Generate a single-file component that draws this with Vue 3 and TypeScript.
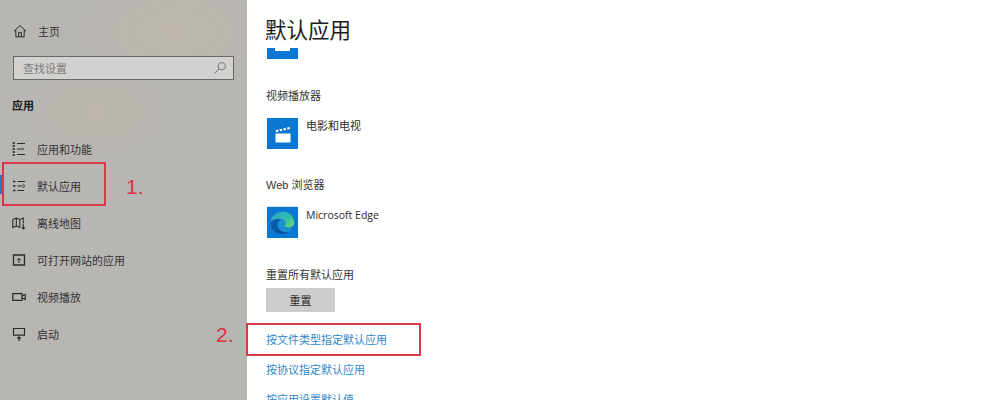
<template>
  <div class="settings">
    <aside class="sidebar">
      <div class="home">
        <svg class="nav-icon" viewBox="0 0 14 14" fill="none" stroke="#2b2b2b" stroke-width="1">
          <path d="M1 7.2 7 1.6 13 7.2M2.8 5.6V12.8H11.2V5.6M5.6 12.8V8.4H8.4V12.8" />
        </svg>
        <span>主页</span>
      </div>
      <div class="search">
        <span>查找设置</span>
        <svg width="14" height="14" viewBox="0 0 14 14" fill="none" stroke="#787876" stroke-width="1">
          <circle cx="8.8" cy="5.2" r="3.7" />
          <path d="M6 8 1.5 12.5" />
        </svg>
      </div>
      <div class="section-title">应用</div>
      <nav class="nav">
        <div v-for="item in navItems" :key="item.label" class="nav-item" :class="{ 'nav-item--active': item.active }">
          <svg class="nav-icon" viewBox="0 0 14 14" fill="none" stroke="#2b2b2b" stroke-width="1" v-html="item.icon"></svg>
          <span>{{ item.label }}</span>
        </div>
      </nav>
    </aside>

    <main class="content">
      <h1 class="title">默认应用</h1>
      <div class="scroller">
        <div class="clipped-tile"></div>

        <section class="group group--video">
          <h2 class="group-label">视频播放器</h2>
          <div class="app-row">
            <div class="tile">
              <svg width="18" height="18" viewBox="0 0 18 18">
                <path fill="#fff" d="M1.5 8.5H16.5V17.5H1.5Z" />
                <path fill="#fff" d="M1.6 5.2 4 4.6 4.6 6.6 2.2 7.2ZM5.4 4.3 7.8 3.7 8.4 5.7 6 6.3ZM9.2 3.4 11.6 2.8 12.2 4.8 9.8 5.4ZM13 2.5 15.4 1.9 16 3.9 13.6 4.5Z" />
              </svg>
            </div>
            <span class="app-name">电影和电视</span>
          </div>
        </section>

        <section class="group group--web">
          <h2 class="group-label">Web 浏览器</h2>
          <div class="app-row">
            <div class="tile tile--edge">
              <svg width="31" height="31" viewBox="0 0 31 31">
                <defs>
                  <linearGradient id="edgeTop" x1="0" y1="0" x2="1" y2="1">
                    <stop offset="0" stop-color="#2a9bd8" />
                    <stop offset="0.6" stop-color="#35c1a5" />
                    <stop offset="1" stop-color="#6fdc6a" />
                  </linearGradient>
                  <linearGradient id="edgeBottom" x1="0" y1="0" x2="1" y2="1">
                    <stop offset="0" stop-color="#0c5fae" />
                    <stop offset="1" stop-color="#0d4d9c" />
                  </linearGradient>
                </defs>
                <path fill="url(#edgeTop)" d="M3.5 15C4.5 8.5 9.5 4.5 15.5 4.5 22.5 4.5 27.3 9.8 27.3 15.5 27.3 18.8 24.5 20.5 21.5 20.5 19 20.5 17.5 19.8 17 19.2 19 18 19.2 15.5 17.8 14 15 11.2 8 10.8 3.5 15Z" />
                <path fill="url(#edgeBottom)" d="M3.5 15C3 21.5 8.5 27 15 27 18 27 20.5 26 22 24.6 17.5 26.2 12 24 10.8 19.5 10 16.5 11.5 13.5 14.2 12.4 10.5 11.4 6.5 12.3 3.5 15Z" />
                <path fill="#1b8fd0" d="M14.2 12.4C11.5 13.5 10 16.5 10.8 19.5 12 24 17.5 26.2 22 24.6 24 23.5 25.3 22 26 20.5 24.8 21 23 21.2 21.5 20.5 19 20.5 17.5 19.8 17 19.2 19 18 19.2 15.5 17.8 14 16.9 13.1 15.6 12.7 14.2 12.4Z" />
              </svg>
            </div>
            <span class="app-name app-name--latin">Microsoft Edge</span>
          </div>
        </section>

        <section class="group group--reset">
          <h2 class="group-label">重置所有默认应用</h2>
          <button class="reset-button" type="button">重置</button>
        </section>

        <div class="links">
          <a class="link">按文件类型指定默认应用</a>
          <a class="link">按协议指定默认应用</a>
          <a class="link">按应用设置默认值</a>
        </div>
      </div>
    </main>

    <!-- red annotations drawn over the screenshot -->
    <div class="mark mark--one"></div>
    <span class="mark-label mark-label--one">1.</span>
    <div class="mark mark--two"></div>
    <span class="mark-label mark-label--two">2.</span>
  </div>
</template>

<script setup lang="ts">
interface NavItem {
  label: string
  icon: string
  active?: boolean
}

const navItems: NavItem[] = [
  {
    label: '应用和功能',
    icon: '<path d="M.5 1H3M.5 4H3M.5 7H3M.5 10H3M.5 13H3" stroke-width="1.7"/><path d="M5 1.5H13M5 7H12M5 12.5H13"/>'
  },
  {
    label: '默认应用',
    icon: '<path d="M1 2.5H3.4M1 7H3.4M1 11.5H3.4" stroke-width="1.7"/><path d="M5.5 2.5H13M5.5 7H10.5M5.5 11.5H12M10.8 5.4 12.8 7 10.8 8.6"/>',
    active: true
  },
  {
    label: '离线地图',
    icon: '<path d="M.8 3.5 4.3 2 7.8 3.5 11.3 2V7.5M.8 3.5V11.5L4.3 10 7.8 11.5M4.3 2V10M7.8 3.5V11.5M11.3 8V13M9.8 11.4 11.3 13 12.8 11.4" stroke-width="1.1"/>'
  },
  {
    label: '可打开网站的应用',
    icon: '<path d="M1.5 2H12.5V12H1.5Z" stroke-width="1.3"/><path d="M7 10V5.5M5 7.3 7 5.3 9 7.3"/>'
  },
  {
    label: '视频播放',
    icon: '<path d="M.8 3.6H10V10.4H.8ZM10 6 13.2 4.4V9.6L10 8" stroke-width="1.2"/>'
  },
  {
    label: '启动',
    icon: '<path d="M1.5 1.5H12.5V8.2H1.5Z" stroke-width="1.2"/><path d="M7 14V9.8M5.2 11.6 7 9.8 8.8 11.6" stroke-width="1.2"/>'
  }
]
</script>

<style>
html,
body {
  margin: 0;
  background: #fff;
}
</style>

<style scoped>
.settings {
  position: relative;
  display: flex;
  width: 988px;
  height: 400px;
  overflow: hidden;
  font-family: "Liberation Sans", "Noto Sans CJK SC", sans-serif;
  font-size: 11px;
  color: #333;
  background: #fff;
}

.sidebar {
  flex: none;
  width: 247px;
  box-sizing: border-box;
  padding-top: 24px;
  background:
    radial-gradient(ellipse 90px 50px at 175px 32px, rgba(193, 184, 168, 0.6), transparent),
    radial-gradient(ellipse 70px 40px at 95px 112px, rgba(192, 183, 167, 0.6), transparent),
    #b8b6b3;
}

.home {
  display: flex;
  align-items: center;
  gap: 11px;
  height: 14px;
  padding-left: 13px;
}

.nav-icon {
  flex: none;
  width: 14px;
  height: 14px;
}

.search {
  display: flex;
  align-items: center;
  justify-content: space-between;
  box-sizing: border-box;
  width: 221px;
  height: 24px;
  margin: 18px 0 0 13px;
  padding: 0 6px 0 9px;
  border: 1px solid #686866;
  background: #d2d1cf;
  color: #7c7c7a;
}

.section-title {
  margin: 19px 0 0 12px;
  font-weight: 700;
  line-height: 14px;
  color: #1c1c1c;
}

.nav {
  display: flex;
  flex-direction: column;
  margin-top: 17px;
}

.nav-item {
  position: relative;
  display: flex;
  align-items: center;
  gap: 11px;
  height: 37px;
  padding-left: 12px;
}

.nav-item--active::before {
  content: "";
  position: absolute;
  left: 0;
  top: 8px;
  width: 3px;
  height: 19px;
  background: #2f74c4;
}

.content {
  flex: 1;
  display: flex;
  flex-direction: column;
  min-width: 0;
  padding-left: 19px;
}

.title {
  flex: none;
  height: 48px;
  margin: 0 0 0 -1px;
  font-size: 21.5px;
  font-weight: 400;
  line-height: 62px;
  color: #1b1b1b;
}

.scroller {
  flex: 1;
  min-height: 0;
  overflow: hidden;
}

.clipped-tile {
  position: relative;
  width: 31px;
  height: 11px;
  margin-left: 1px;
  background: #0a78d2;
}

.clipped-tile::before {
  content: "";
  position: absolute;
  top: 0;
  left: 8px;
  width: 15px;
  height: 3px;
  background: #fff;
}

.group--video {
  margin-top: 30px;
}

.group--web {
  margin-top: 29px;
}

.group--reset {
  margin-top: 30px;
}

.group-label {
  margin: 0;
  font-size: 11px;
  font-weight: 400;
  line-height: 14px;
  color: #333;
}

.app-row {
  display: flex;
  gap: 8px;
  margin: 15px 0 0 1px;
}

.tile {
  display: flex;
  align-items: center;
  justify-content: center;
  width: 31px;
  height: 31px;
  background: #0a78d2;
}

.tile--edge {
  box-shadow: 0 -1px 0 #cfe4f6;
}

.app-name {
  margin-top: 1px;
  line-height: 15px;
  color: #2a2a2a;
}

.app-name--latin {
  font-family: "Open Sans", "Liberation Sans", sans-serif;
  font-size: 10.5px;
}

.reset-button {
  display: block;
  width: 69px;
  height: 24px;
  margin-top: 6px;
  padding: 0;
  border: none;
  background: #cccccc;
  font: inherit;
  color: #2a2a2a;
}

.links {
  display: flex;
  flex-direction: column;
  gap: 15px;
  margin-top: 21px;
}

.link {
  line-height: 15px;
  color: #2f86c9;
}

.mark {
  position: absolute;
  box-sizing: border-box;
  border: 2px solid #d83a44;
}

.mark--one {
  left: 2px;
  top: 162px;
  width: 104px;
  height: 44px;
}

.mark--two {
  left: 246px;
  top: 323px;
  width: 175px;
  height: 33px;
}

.mark-label {
  position: absolute;
  font-family: "Liberation Sans", sans-serif;
  font-size: 21px;
  line-height: 24px;
  color: #dd3344;
}

.mark-label--one {
  left: 126px;
  top: 175px;
}

.mark-label--two {
  left: 216px;
  top: 323px;
}
</style>
